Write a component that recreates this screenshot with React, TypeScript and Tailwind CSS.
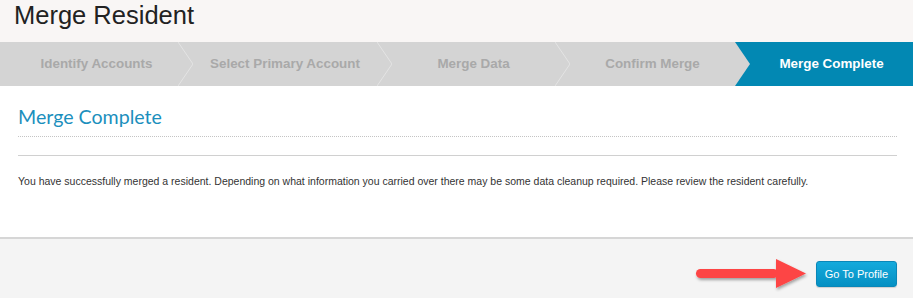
import React from 'react';

type Step = { label: string; width: string; first?: boolean };

const STEPS: Step[] = [
  { label: 'Identify Accounts', width: 'w-[178px]', first: true },
  { label: 'Select Primary Account', width: 'w-[199px]' },
  { label: 'Merge Data', width: 'w-[178px]' },
  { label: 'Confirm Merge', width: 'w-[180px]' },
];

function Chevron() {
  return (
    <svg width="15" height="44" viewBox="0 0 15 44" className="shrink-0">
      <polyline points="0,0 15,22 0,44" fill="none" stroke="#e4e4e4" strokeWidth="1" />
    </svg>
  );
}

function RedArrow() {
  return (
    <svg width="118" height="36" viewBox="0 0 118 36" className="mr-[6px]">
      <defs>
        <filter id="sh" x="-20%" y="-40%" width="140%" height="180%">
          <feDropShadow dx="1" dy="2" stdDeviation="1.5" floodColor="#000" floodOpacity="0.35" />
        </filter>
      </defs>
      <g filter="url(#sh)">
        <rect x="4" y="13" width="82" height="9" rx="4.5" fill="#fd4444" />
        <polygon points="84,3 114,17.5 84,32" fill="#fd4444" />
      </g>
    </svg>
  );
}

export default function App() {
  return (
    <div className="w-[913px] h-[298px] bg-white flex flex-col overflow-hidden" style={{ fontFamily: '"Liberation Sans", Arial, sans-serif' }}>
      {/* Title */}
      <div className="h-[42px] bg-[#f9f6f5] px-[14px] pt-[1px]">
        <h1 className="text-[25.5px] leading-[28px] text-[#222]">Merge Resident</h1>
      </div>

      {/* Steps */}
      <div className="h-[44px] flex bg-[#d4d4d4] text-[13.4px] font-bold">
        {STEPS.map((s) => (
          <div key={s.label} className={`${s.width} flex shrink-0`}>
            {s.first ? <div className="w-[15px] shrink-0" /> : <Chevron />}
            <div className="flex-1 flex items-center justify-center text-[#a9a9a9]">{s.label}</div>
          </div>
        ))}
        <div className="flex-1 flex bg-[#0288b3]">
          <svg width="15" height="44" viewBox="0 0 15 44" className="shrink-0">
            <polygon points="0,0 15,22 0,44" fill="#d4d4d4" />
          </svg>
          <div className="flex-1 flex items-center justify-center text-white">Merge Complete</div>
        </div>
      </div>

      {/* Content */}
      <div className="h-[151px] pl-[18px] pr-4 pt-[19px]">
        <h2
          className="text-[19.6px] leading-[24px] text-[#1b8fbd] pb-[7px] border-b border-dotted border-[#c4c4c4]"
          style={{ fontFamily: 'Lato, "Liberation Sans", sans-serif' }}
        >
          Merge Complete
        </h2>
        <div className="mt-[18px] border-t border-[#d0d0d0]" />
        <p className="mt-[17px] text-[10.5px] leading-[16px] text-[#333]">
          You have successfully merged a resident. Depending on what information you carried over there may be some data cleanup required. Please review the resident carefully.
        </p>
      </div>

      {/* Footer */}
      <div className="flex-1 bg-[#f4f4f4] border-t-2 border-[#d6d6d6] flex justify-end items-start pr-4 pt-[17px]">
        <div className="flex items-center">
          <RedArrow />
          <button className="h-[26px] w-[81px] rounded-[3px] border border-[#0a87b8] bg-gradient-to-b from-[#14aadc] to-[#0590c3] text-white text-[11px] shadow-[0_1px_1px_rgba(0,0,0,0.15)]">
            Go To Profile
          </button>
        </div>
      </div>
    </div>
  );
}
